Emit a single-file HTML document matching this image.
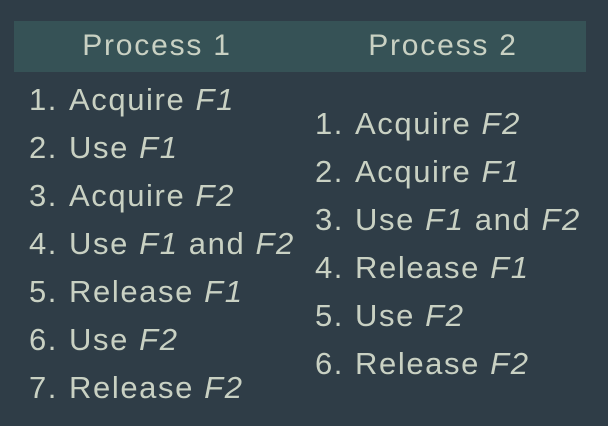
<!DOCTYPE html>
<html><head><style>
html,body{margin:0;padding:0;}
body{width:608px;height:426px;background:#2f3d47;position:relative;overflow:hidden;font-family:"Liberation Sans",sans-serif;color:#c9d1c3;}
.hd{position:absolute;left:14px;top:21px;width:572px;height:51px;background:#365256;}
.h{position:absolute;top:26px;font-size:30px;line-height:40px;text-align:center;width:286px;letter-spacing:1.8px;}
.l{position:absolute;font-size:31px;line-height:40px;white-space:nowrap;letter-spacing:1.6px;}
.n{position:absolute;width:30px;text-align:right;}
.t{position:absolute;}
i{font-style:italic;}
</style></head><body>
<div class="hd"></div>
<div class="h" style="left:14px">Process 1</div>
<div class="h" style="left:300px">Process 2</div>

<div class="l" style="top:80px;left:28px"><span class="n" style="left:0">1.</span><span class="t" style="left:41px">Acquire <i>F1</i></span></div>
<div class="l" style="top:128px;left:28px"><span class="n" style="left:0">2.</span><span class="t" style="left:41px">Use <i>F1</i></span></div>
<div class="l" style="top:176px;left:28px"><span class="n" style="left:0">3.</span><span class="t" style="left:41px">Acquire <i>F2</i></span></div>
<div class="l" style="top:224px;left:28px"><span class="n" style="left:0">4.</span><span class="t" style="left:41px">Use <i>F1</i> and <i>F2</i></span></div>
<div class="l" style="top:272px;left:28px"><span class="n" style="left:0">5.</span><span class="t" style="left:41px">Release <i>F1</i></span></div>
<div class="l" style="top:320px;left:28px"><span class="n" style="left:0">6.</span><span class="t" style="left:41px">Use <i>F2</i></span></div>
<div class="l" style="top:368px;left:28px"><span class="n" style="left:0">7.</span><span class="t" style="left:41px">Release <i>F2</i></span></div>

<div class="l" style="top:104px;left:314px"><span class="n" style="left:0">1.</span><span class="t" style="left:41px">Acquire <i>F2</i></span></div>
<div class="l" style="top:152px;left:314px"><span class="n" style="left:0">2.</span><span class="t" style="left:41px">Acquire <i>F1</i></span></div>
<div class="l" style="top:200px;left:314px"><span class="n" style="left:0">3.</span><span class="t" style="left:41px">Use <i>F1</i> and <i>F2</i></span></div>
<div class="l" style="top:248px;left:314px"><span class="n" style="left:0">4.</span><span class="t" style="left:41px">Release <i>F1</i></span></div>
<div class="l" style="top:296px;left:314px"><span class="n" style="left:0">5.</span><span class="t" style="left:41px">Use <i>F2</i></span></div>
<div class="l" style="top:344px;left:314px"><span class="n" style="left:0">6.</span><span class="t" style="left:41px">Release <i>F2</i></span></div>
</body></html>
